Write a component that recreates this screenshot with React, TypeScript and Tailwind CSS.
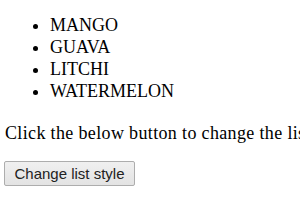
export default function App() {
  return (
    <div className="min-h-screen bg-white pl-[5px] pt-[14px] font-['Liberation_Serif',serif] text-[18px] leading-[22px] text-black">
      <ul className="list-disc pl-[45px]">
        <li>MANGO</li>
        <li>GUAVA</li>
        <li>LITCHI</li>
        <li>WATERMELON</li>
      </ul>
      <p className="mt-[20px] whitespace-nowrap tracking-[0.35px]">Click the below button to change the list style.</p>
      <button
        type="button"
        className="mt-[17px] -ml-px h-[25px] w-[131px] rounded-[2px] border border-[#adadad] bg-gradient-to-b from-[#f0f0f0] to-[#e3e3e3] font-['Liberation_Sans',sans-serif] text-[15px] leading-none text-[#222]"
      >
        Change list style
      </button>
    </div>
  );
}
